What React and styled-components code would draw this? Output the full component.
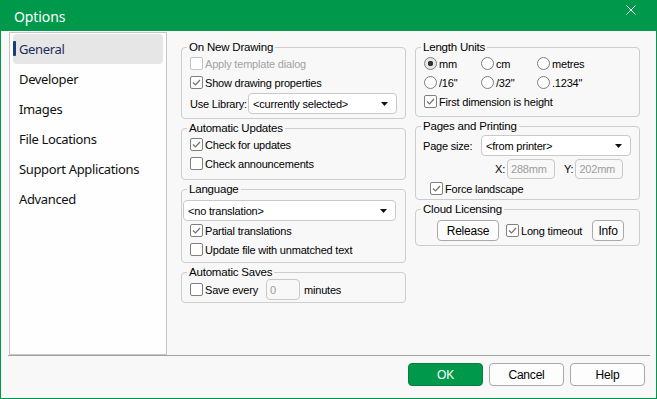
import styled, { createGlobalStyle } from "styled-components";

const GlobalStyle = createGlobalStyle`
  html, body { margin: 0; padding: 0; background: #fff; }
  * { box-sizing: border-box; }
`;

const GREEN = "#00994c";

// ─── Window frame ──────────────────────────────────────────────
const Window = styled.div`
  width: 657px;
  height: 399px;
  border: 1px solid ${GREEN};
  background: #f8f8f8;
  display: flex;
  flex-direction: column;
  font-family: "Liberation Sans", Arial, sans-serif;
  font-size: 11px;
  letter-spacing: -0.2px;
  color: #000;
`;

const TitleBar = styled.div`
  height: 30px;
  flex: none;
  background: ${GREEN};
  color: #fff;
  display: flex;
  align-items: center;
  justify-content: space-between;
  padding: 1px 20px 0 13px;
  font-family: "Noto Sans", sans-serif;
  font-size: 14px;
  letter-spacing: -0.1px;
`;

const CloseIcon = styled.svg`
  width: 10px;
  height: 10px;
  margin-top: -14px;
`;

const Body = styled.div`
  display: flex;
  height: 324px;
  padding: 1px 0 0 8px;
  gap: 14px;
`;

// ─── Sidebar ───────────────────────────────────────────────────
const Sidebar = styled.nav`
  width: 158px;
  flex: none;
  background: #fefefe;
  border: 1px solid #c6c6c6;
  padding: 1px 3px;
  display: flex;
  flex-direction: column;
`;

const NavItem = styled.div`
  position: relative;
  height: 30px;
  flex: none;
  border-radius: 4px;
  display: flex;
  align-items: center;
  padding-left: 6px;
  font-family: "Noto Sans", sans-serif;
  font-size: 13px;
  letter-spacing: -0.35px;
  background: ${(p) => (p.$active ? "#e6e6e6" : "transparent")};
  color: ${(p) => (p.$active ? "#1c2c5c" : "#111")};

  &::before {
    content: "";
    display: ${(p) => (p.$active ? "block" : "none")};
    position: absolute;
    left: 0;
    top: 7px;
    width: 3px;
    height: 15px;
    border-radius: 1px;
    background: #1c3d78;
  }
`;

// ─── Groups ────────────────────────────────────────────────────
const Content = styled.div`
  display: flex;
  gap: 9px;
  padding-top: 8px;
`;

const Column = styled.div`
  width: 225px;
  display: flex;
  flex-direction: column;
  gap: 2px;
`;

const Group = styled.fieldset`
  margin: 0;
  padding: 0;
  min-width: 0;
  border: 1px solid #cdcdcd;
  border-radius: 4px;
`;

const Legend = styled.legend`
  margin-left: 5px;
  padding: 0 2px;
  line-height: 14px;
  font-size: 11.5px;
`;

const GroupBody = styled.div`
  display: flex;
  flex-direction: column;
  padding: ${(p) => p.$pad};
`;

const Row = styled.div`
  height: ${(p) => p.$h || 19}px;
  flex: none;
  display: flex;
  align-items: center;
  justify-content: ${(p) => (p.$spread ? "space-between" : "flex-start")};
  gap: ${(p) => p.$gap || 0}px;
  margin-top: ${(p) => p.$mt || 0}px;
  padding-left: ${(p) => p.$indent || 0}px;
  white-space: nowrap;
  color: ${(p) => (p.$disabled ? "#a3a3a3" : "#000")};
`;

const RadioGrid = styled.div`
  display: grid;
  grid-template-columns: 57px 56px 1fr;
`;

// ─── Controls ──────────────────────────────────────────────────
const Box = styled.span`
  width: 13px;
  height: 13px;
  flex: none;
  margin-right: 2px;
  border: 1px solid ${(p) => (p.$disabled ? "#c4c4c4" : "#808080")};
  border-radius: 2px;
  background: #fff;
  display: flex;
  align-items: center;
  justify-content: center;
`;

const Tick = () => (
  <svg width="11" height="11" viewBox="0 0 11 11">
    <path d="M2 5.5 L4.5 8 L9 3" fill="none" stroke="#707070" strokeWidth="1.2" />
  </svg>
);

function Check({ checked, disabled, indent, children }) {
  return (
    <Row $disabled={disabled} $indent={indent}>
      <Box $disabled={disabled}>{checked && <Tick />}</Box>
      {children}
    </Row>
  );
}

const RadioDot = styled.span`
  width: 13px;
  height: 13px;
  flex: none;
  margin-right: 2px;
  border: 1px solid #7e7e7e;
  border-radius: 50%;
  background: ${(p) =>
    p.$on ? "radial-gradient(circle, #333 0 2.5px, #e8e8e8 3px)" : "#fff"};
`;

function Radio({ on, children }) {
  return (
    <Row>
      <RadioDot $on={on} />
      {children}
    </Row>
  );
}

const SelectBox = styled.div`
  width: ${(p) => p.$w}px;
  height: 21px;
  flex: none;
  margin-top: ${(p) => p.$mt || 0}px;
  border: 1px solid #c9c9c9;
  border-radius: 4px;
  background: #fff;
  display: flex;
  align-items: center;
  justify-content: space-between;
  padding: 0 8px 0 4px;
`;

function Select({ w, mt, children }) {
  return (
    <SelectBox $w={w} $mt={mt}>
      {children}
      <svg width="7" height="4" viewBox="0 0 7 4">
        <path d="M0 0 H7 L3.5 4 Z" fill="#111" />
      </svg>
    </SelectBox>
  );
}

const Field = styled.div`
  width: ${(p) => p.$w}px;
  height: ${(p) => p.$h || 21}px;
  flex: none;
  border: 1px solid #c9c9c9;
  border-radius: 4px;
  background: #f8f8f8;
  color: #9c9c9c;
  display: flex;
  align-items: center;
  padding-left: 3px;
  margin: 0 ${(p) => p.$mr || 0}px 0 ${(p) => p.$ml || 0}px;
`;

const Label = styled.span`
  width: ${(p) => (p.$w ? `${p.$w}px` : "auto")};
  flex: none;
`;

const Button = styled.button`
  height: ${(p) => p.$h || 21}px;
  width: ${(p) => p.$w}px;
  flex: none;
  border-radius: 4px;
  border: 1px solid ${(p) => (p.$primary ? "#0b7d43" : "#a9a9a9")};
  background: ${(p) => (p.$primary ? GREEN : "#fdfdfd")};
  color: ${(p) => (p.$primary ? "#fff" : "#000")};
  font-family: "Liberation Sans", Arial, sans-serif;
  font-size: 12px;
  letter-spacing: -0.2px;
  padding: 0;
  margin-left: ${(p) => (p.$push ? "auto" : "0")};
`;

const Footer = styled.div`
  margin: 0 6px 0 7px;
  border-top: 1px solid #a2a2a2;
  padding: 7px 5px 0 0;
  display: flex;
  justify-content: flex-end;
  gap: 6px;
`;

const navItems = ["General", "Developer", "Images", "File Locations", "Support Applications", "Advanced"];

export default function App() {
  return (
    <>
      <GlobalStyle />
      <Window>
        <TitleBar>
          <span>Options</span>
          <CloseIcon viewBox="0 0 10 10">
            <path d="M0.5 0.5 L9.5 9.5 M9.5 0.5 L0.5 9.5" stroke="#fff" strokeWidth="1" />
          </CloseIcon>
        </TitleBar>

        <Body>
          <Sidebar>
            {navItems.map((n, i) => (
              <NavItem key={n} $active={i === 0}>{n}</NavItem>
            ))}
          </Sidebar>

          <Content>
            <Column>
              <Group>
                <Legend>On New Drawing</Legend>
                <GroupBody $pad="0 8px 4px 8px">
                  <Check disabled>Apply template dialog</Check>
                  <Check checked>Show drawing properties</Check>
                  <Row $h={21} $mt={1} $spread>
                    <Label>Use Library:</Label>
                    <Select w={149}>&lt;currently selected&gt;</Select>
                  </Row>
                </GroupBody>
              </Group>

              <Group>
                <Legend>Automatic Updates</Legend>
                <GroupBody $pad="0 8px 6px 8px">
                  <Check checked>Check for updates</Check>
                  <Check>Check announcements</Check>
                </GroupBody>
              </Group>

              <Group>
                <Legend>Language</Legend>
                <GroupBody $pad="0 7px 3px 1px">
                  <Select w={213} mt={4}>&lt;no translation&gt;</Select>
                  <Check checked indent={7}>Partial translations</Check>
                  <Check indent={7}>Update file with unmatched text</Check>
                </GroupBody>
              </Group>

              <Group>
                <Legend>Automatic Saves</Legend>
                <GroupBody $pad="0 8px 2px 8px">
                  <Row $h={21}>
                    <Box />
                    Save every
                    <Field $w={34} $ml={8} $mr={4}>0</Field>
                    minutes
                  </Row>
                </GroupBody>
              </Group>
            </Column>

            <Column>
              <Group>
                <Legend>Length Units</Legend>
                <GroupBody $pad="0 8px 5px 8px">
                  <RadioGrid>
                    <Radio on>mm</Radio>
                    <Radio>cm</Radio>
                    <Radio>metres</Radio>
                    <Radio>/16"</Radio>
                    <Radio>/32"</Radio>
                    <Radio>.1234"</Radio>
                  </RadioGrid>
                  <Check checked>First dimension is height</Check>
                </GroupBody>
              </Group>

              <Group>
                <Legend>Pages and Printing</Legend>
                <GroupBody $pad="2px 8px 1px 7px">
                  <Row $h={21}>
                    <Label $w={58}>Page size:</Label>
                    <Select w={150}>&lt;from printer&gt;</Select>
                  </Row>
                  <Row $h={20} $mt={3} $indent={72}>
                    <Label>X:</Label>
                    <Field $w={48} $h={20} $ml={2} $mr={9}>288mm</Field>
                    <Label>Y:</Label>
                    <Field $w={48} $h={20} $ml={2}>202mm</Field>
                  </Row>
                  <Check checked indent={7}>Force landscape</Check>
                </GroupBody>
              </Group>

              <Group>
                <Legend>Cloud Licensing</Legend>
                <GroupBody $pad="4px 15px 4px 21px">
                  <Row $h={21} $gap={7}>
                    <Button $w={62}>Release</Button>
                    <Check checked>Long timeout</Check>
                    <Button $w={32} $push>Info</Button>
                  </Row>
                </GroupBody>
              </Group>
            </Column>
          </Content>
        </Body>

        <Footer>
          <Button $primary $w={75} $h={23}>OK</Button>
          <Button $w={75} $h={23}>Cancel</Button>
          <Button $w={75} $h={23}>Help</Button>
        </Footer>
      </Window>
    </>
  );
}
